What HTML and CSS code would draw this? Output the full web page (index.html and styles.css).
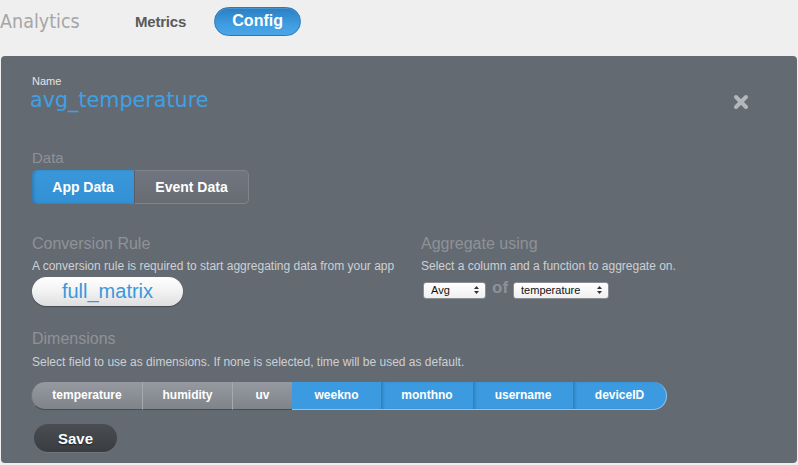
FILE: index.html
```html
<!DOCTYPE html>
<html>
<head>
<meta charset="utf-8">
<link rel="stylesheet" href="styles.css">
</head>
<body>
<div class="topbar">
  <span class="brand">Analytics</span>
  <span class="nav-link">Metrics</span>
  <span class="nav-pill">Config</span>
</div>
<div class="panel">
  <div class="name-row">
    <div class="name-block">
      <div class="small-label">Name</div>
      <div class="name-value">avg_temperature</div>
    </div>
    <div class="close" aria-label="close">
      <svg width="16" height="16" viewBox="0 0 16 16"><path d="M3 3 L13 13 M13 3 L3 13" stroke="#b3b7bd" stroke-width="4" stroke-linecap="round"/></svg>
    </div>
  </div>

  <div class="section-label data-label">Data</div>
  <div class="toggle">
    <span class="toggle-item active">App Data</span>
    <span class="toggle-item">Event Data</span>
  </div>

  <div class="two-col">
    <div class="col">
      <div class="section-label">Conversion Rule</div>
      <div class="desc">A conversion rule is required to start aggregating data from your app</div>
      <div class="rule-pill">full_matrix</div>
    </div>
    <div class="col">
      <div class="section-label">Aggregate using</div>
      <div class="desc">Select a column and a function to aggregate on.</div>
      <div class="agg-row">
        <span class="select sel-fn">Avg<span class="arrows"><svg width="5" height="8" viewBox="0 0 5 8"><path d="M0 3 L2.5 0 L5 3 Z M0 5 L2.5 8 L5 5 Z" fill="#333"/></svg></span></span>
        <span class="of">of</span>
        <span class="select sel-col">temperature<span class="arrows"><svg width="5" height="8" viewBox="0 0 5 8"><path d="M0 3 L2.5 0 L5 3 Z M0 5 L2.5 8 L5 5 Z" fill="#333"/></svg></span></span>
      </div>
    </div>
  </div>

  <div class="section-label dim-label">Dimensions</div>
  <div class="desc">Select field to use as dimensions. If none is selected, time will be used as default.</div>
  <div class="segbar">
    <span class="seg grey first" style="width:112px">temperature</span>
    <span class="seg grey" style="width:90px">humidity</span>
    <span class="seg grey" style="width:59px">uv</span>
    <span class="seg blue" style="width:89px">weekno</span>
    <span class="seg blue" style="width:92px">monthno</span>
    <span class="seg blue" style="width:100px">username</span>
    <span class="seg blue last" style="width:94px">deviceID</span>
  </div>
  <div class="save">Save</div>
</div>
</body>
</html>
```
FILE: styles.css
```css
html, body {
  margin: 0;
  padding: 0;
}
body {
  background: #efefef;
  font-family: "Liberation Sans", Arial, sans-serif;
  width: 798px;
  height: 465px;
  overflow: hidden;
}
.topbar {
  display: flex;
  align-items: center;
  height: 43px;
}
.brand {
  font-family: "DejaVu Sans", sans-serif;
  font-size: 19.5px;
  color: #a6a6a6;
  width: 80px;
  white-space: nowrap;
  transform: scaleX(0.9);
  transform-origin: left center;
  margin-top: -1px;
}
.nav-link {
  margin-left: 55px;
  font-size: 15px;
  font-weight: bold;
  color: #5a5a5a;
  letter-spacing: -0.2px;
  margin-top: -1px;
}
.nav-pill {
  margin-left: 28px;
  width: 85px;
  height: 27px;
  border: 1px solid #2a78b9;
  border-radius: 15px;
  background: linear-gradient(#2a7ec2, #3f9ce0 60%, #4aa6e6);
  color: #fff;
  font-size: 16px;
  font-weight: bold;
  display: flex;
  align-items: center;
  justify-content: center;
  box-shadow: inset 0 1px 0 rgba(255,255,255,0.15);
  margin-top: -1px;
}
.panel {
  margin: 13px 1px 0 1px;
  height: 407px;
  background: #646a72;
  border-radius: 4px;
  box-sizing: border-box;
  padding: 19px 48px 0 31px;
}
.name-row {
  display: flex;
  justify-content: space-between;
  align-items: center;
}
.small-label {
  font-size: 11px;
  line-height: 13px;
  color: #e2e4e6;
}
.name-value {
  font-family: "DejaVu Sans", sans-serif;
  font-size: 20.7px;
  line-height: 24px;
  color: #3fa0e6;
  margin-left: -2px;
}
.close {
  width: 16px;
  height: 16px;
  margin-top: 16px;
}
.close svg {
  display: block;
}
.section-label {
  font-size: 15px;
  line-height: 18px;
  color: #8e9298;
}
.data-label {
  margin-top: 37px;
}
.toggle {
  display: flex;
  margin-top: 3px;
  width: 217px;
  height: 34px;
}
.toggle-item {
  display: flex;
  align-items: center;
  justify-content: center;
  font-size: 14px;
  font-weight: bold;
  color: #fff;
  box-sizing: border-box;
}
.toggle-item.active {
  width: 102px;
  background: linear-gradient(#3a97da, #3390d4);
  border-radius: 5px 0 0 5px;
  box-shadow: inset 2px 0 3px rgba(0,0,0,0.15);
}
.toggle-item:not(.active) {
  width: 115px;
  border: 1px solid #80858b;
  border-left-color: #5a5f66;
  border-radius: 0 5px 5px 0;
  background: linear-gradient(#707580, #676c73);
}
.two-col {
  display: grid;
  grid-template-columns: 389px 1fr;
  margin-top: 30px;
}
.col .section-label {
  font-size: 16px;
  line-height: 19px;
}
.desc {
  font-size: 12px;
  line-height: 14px;
  color: #cdd0d4;
  margin-top: 6px;
}
.rule-pill {
  margin-top: 4px;
  width: 151px;
  height: 29px;
  border-radius: 15px;
  background: linear-gradient(#ffffff, #f2f2f2 50%, #dedede);
  box-shadow: 0 1px 1px rgba(0,0,0,0.3);
  color: #3a98dc;
  font-size: 20px;
  display: flex;
  align-items: center;
  justify-content: center;
}
.agg-row {
  display: flex;
  align-items: center;
  margin-top: 6px;
  height: 20px;
}
.select {
  height: 17px;
  box-sizing: border-box;
  border: 1px solid #8a8d92;
  border-radius: 3px;
  background: linear-gradient(#ffffff, #f0f0f0);
  font-size: 11px;
  color: #111;
  display: flex;
  align-items: center;
  padding-left: 7px;
  position: relative;
  margin-top: 2px;
}
.sel-fn {
  width: 63px;
  margin-left: 2px;
}
.sel-col {
  width: 96px;
  padding-left: 7px;
}
.arrows {
  position: absolute;
  right: 6px;
  top: 3px;
  display: block;
  line-height: 0;
}
.of {
  font-size: 17px;
  font-weight: bold;
  color: #8e9298;
  margin: -3px 5px 0 6px;
}
.dim-label {
  margin-top: 23px;
  font-size: 16px;
  line-height: 19px;
}
.dim-label + .desc {
  margin-top: 7px;
}
.segbar {
  display: flex;
  margin-top: 13px;
  margin-left: -1px;
  height: 28px;
}
.seg {
  box-sizing: border-box;
  display: flex;
  align-items: center;
  justify-content: center;
  font-size: 12px;
  font-weight: bold;
  color: #fff;
  height: 28px;
  padding-bottom: 1px;
}
.seg.grey {
  background: linear-gradient(#969aa0, #7f838a);
  border-bottom: 1px solid #484c52;
  border-right: 1px solid #a6a9ae;
}
.seg.grey:nth-child(3) {
  border-right: none;
}
.seg.first {
  border-radius: 14px 0 0 14px;
  border-left: 1px solid #70747a;
}
.seg.blue {
  background: #3b9ae0;
  border-bottom: 1px solid #8cc6f0;
  box-shadow: inset 3px 0 3px -1px rgba(0,0,0,0.18);
}
.seg.blue:nth-child(4) {
  box-shadow: none;
}
.seg.last {
  border-radius: 0 14px 14px 0;
  border-right: 1px solid #8cc6f0;
}
.save {
  margin-top: 14px;
  margin-left: 2px;
  width: 83px;
  height: 28px;
  border-radius: 14px;
  background: linear-gradient(#4a4d52, #393c40);
  box-shadow: 0 1px 0 rgba(255,255,255,0.08);
  color: #fff;
  font-size: 15px;
  font-weight: bold;
  display: flex;
  align-items: center;
  justify-content: center;
  text-shadow: 0 1px 1px rgba(0,0,0,0.5);
}
```
